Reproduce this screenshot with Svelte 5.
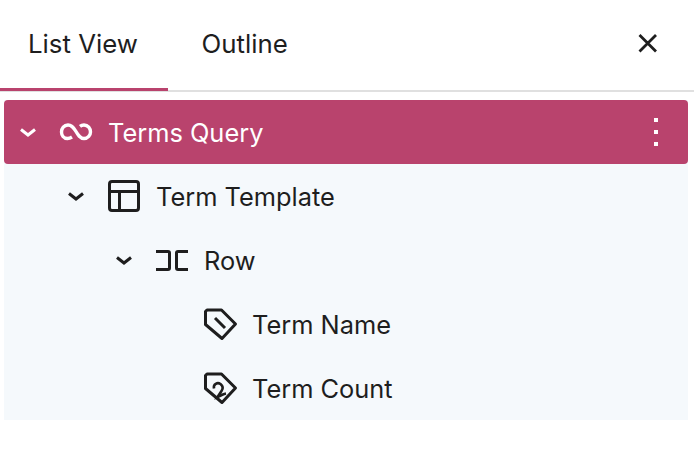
<script>
  const rows = [
    { label: 'Term Template', level: 1, icon: 'layout', chevron: true },
    { label: 'Row', level: 2, icon: 'row', chevron: true },
    { label: 'Term Name', level: 3, icon: 'tag1', chevron: false },
    { label: 'Term Count', level: 3, icon: 'tag2', chevron: false }
  ];
</script>

{#snippet chevron(cls)}
  <svg class={cls} viewBox="0 0 24 24" width="24" height="24" fill="none" stroke="currentColor" stroke-width="3"><path d="M5 9.500 12 15 19 9.500" /></svg>
{/snippet}

<div class="panel">
  <header class="tabs">
    <button class="tab active">List View</button>
    <button class="tab second">Outline</button>
    <span class="spacer"></span>
    <svg class="close" viewBox="0 0 24 24" width="24" height="24" fill="none" stroke="#1e1e1e" stroke-width="2.8"><path d="M3.500 3 20 19.500M20 3 3.500 19.500" /></svg>
  </header>

  <div class="tree">
    <div class="row selected">
      {@render chevron('chev')}
      <svg class="icon" viewBox="0 0 48 48" width="48" height="48" fill="none" stroke="currentColor" stroke-width="3.400"><path transform="translate(0 -1.500)" d="M20 30.500C18.500 31.500 17 32 15.500 32 11.500 32 9.500 28.500 9.500 25.500 9.500 22 12 18.500 16 18.500 20 18.500 22 21.500 24 25 26 28.500 28 32 32 32 36 32 38.500 28.500 38.500 25.500 38.500 22 36 18.500 32 18.500 30.500 18.500 29 19 28 19.800" /></svg>
      <span class="label">Terms Query</span>
      <svg class="more" viewBox="0 0 6 36" width="6" height="36" fill="#fff"><rect x="0" y="4" width="4" height="4" /><rect x="0" y="16" width="4" height="4" /><rect x="0" y="28" width="4" height="4" /></svg>
    </div>

    {#each rows as row}
      <div class="row level-{row.level}">
        {#if row.chevron}
          {@render chevron('chev')}
        {:else}
          <span class="chev"></span>
        {/if}
        <svg class="icon" viewBox="0 0 48 48" width="48" height="48" fill="none" stroke="#1e1e1e" stroke-width="3">
          {#if row.icon === 'layout'}
            <rect x="9.500" y="9.500" width="29" height="29" rx="2.500" />
            <path d="M9.500 19.500h29M19.500 19.500v19" />
          {:else if row.icon === 'row'}
            <path d="M8 15.500h12a1.500 1.500 0 0 1 1.500 1.500v15a1.500 1.500 0 0 1-1.500 1.500H8M40 15.500H30a1.500 1.500 0 0 0-1.500 1.500v15a1.500 1.500 0 0 0 1.500 1.500h10" />
          {:else if row.icon === 'tag1'}
            <path d="M11 10H25.500L39.500 24 26 38.500 9.500 24.500V11.500Z" stroke-linejoin="round" />
            <path d="M19 18 29 28" />
          {:else}
            <path d="M11 10H25.500L39.500 24 26 38.500 9.500 24.500V11.500Z" stroke-linejoin="round" />
            <path d="M18 24.500C17 20 21.500 18 24.500 20 27.500 22.500 27 25 25.500 27L21.500 33C24 32 27 30 30 29.500" stroke-width="2.600" />
          {/if}
        </svg>
        <span class="label">{row.label}</span>
      </div>
    {/each}
  </div>
</div>

<style>
  :global(body) {
    margin: 0;
    background: #fff;
  }
  .panel {
    width: 694px;
    height: 454px;
    font-family: Inter, "Liberation Sans", sans-serif;
    color: #1e1e1e;
    font-size: 25.400px;
  }
  .tabs {
    display: flex;
    align-items: center;
    height: 92px;
    box-sizing: border-box;
    border-bottom: 2px solid #e0e0e0;
  }
  .tab {
    all: unset;
    font-family: inherit;
    font-size: 25.800px;
    color: inherit;
    height: 88px;
    display: flex;
    align-items: center;
    white-space: nowrap;
    padding: 0 32px 0 28px;
  }
  .tab.active {
    width: 168px;
    box-sizing: border-box;
    height: 91px;
    margin-top: 1px;
    border-bottom: 3px solid #b9436d;
    padding-bottom: 2px;
  }
  .tab.second {
    padding-left: 33.500px;
    padding-bottom: 4px;
    height: 86px;
  }
  .spacer {
    flex: 1;
  }
  .close {
    width: 24px;
    height: 24px;
    margin-right: 34px;
    margin-bottom: 3px;
  }
  .tree {
    margin: 8px 6px 0 4px;
    background: #f5f9fc;
  }
  .row {
    display: flex;
    align-items: center;
    height: 64px;
  }
  .selected {
    background: #b9436d;
    color: #fff;
    border-radius: 4px;
  }
  .chev {
    width: 24px;
    height: 24px;
    margin-left: 12px;
    flex: none;
  }
  .icon {
    margin-left: 12px;
    flex: none;
  }
  .label {
    margin-left: 8px;
    white-space: nowrap;
  }
  .level-1 { padding-left: 48px; }
  .level-2 { padding-left: 96px; }
  .level-3 { padding-left: 144px; }
  .more {
    margin-left: auto;
    margin-right: 28px;
  }
</style>
